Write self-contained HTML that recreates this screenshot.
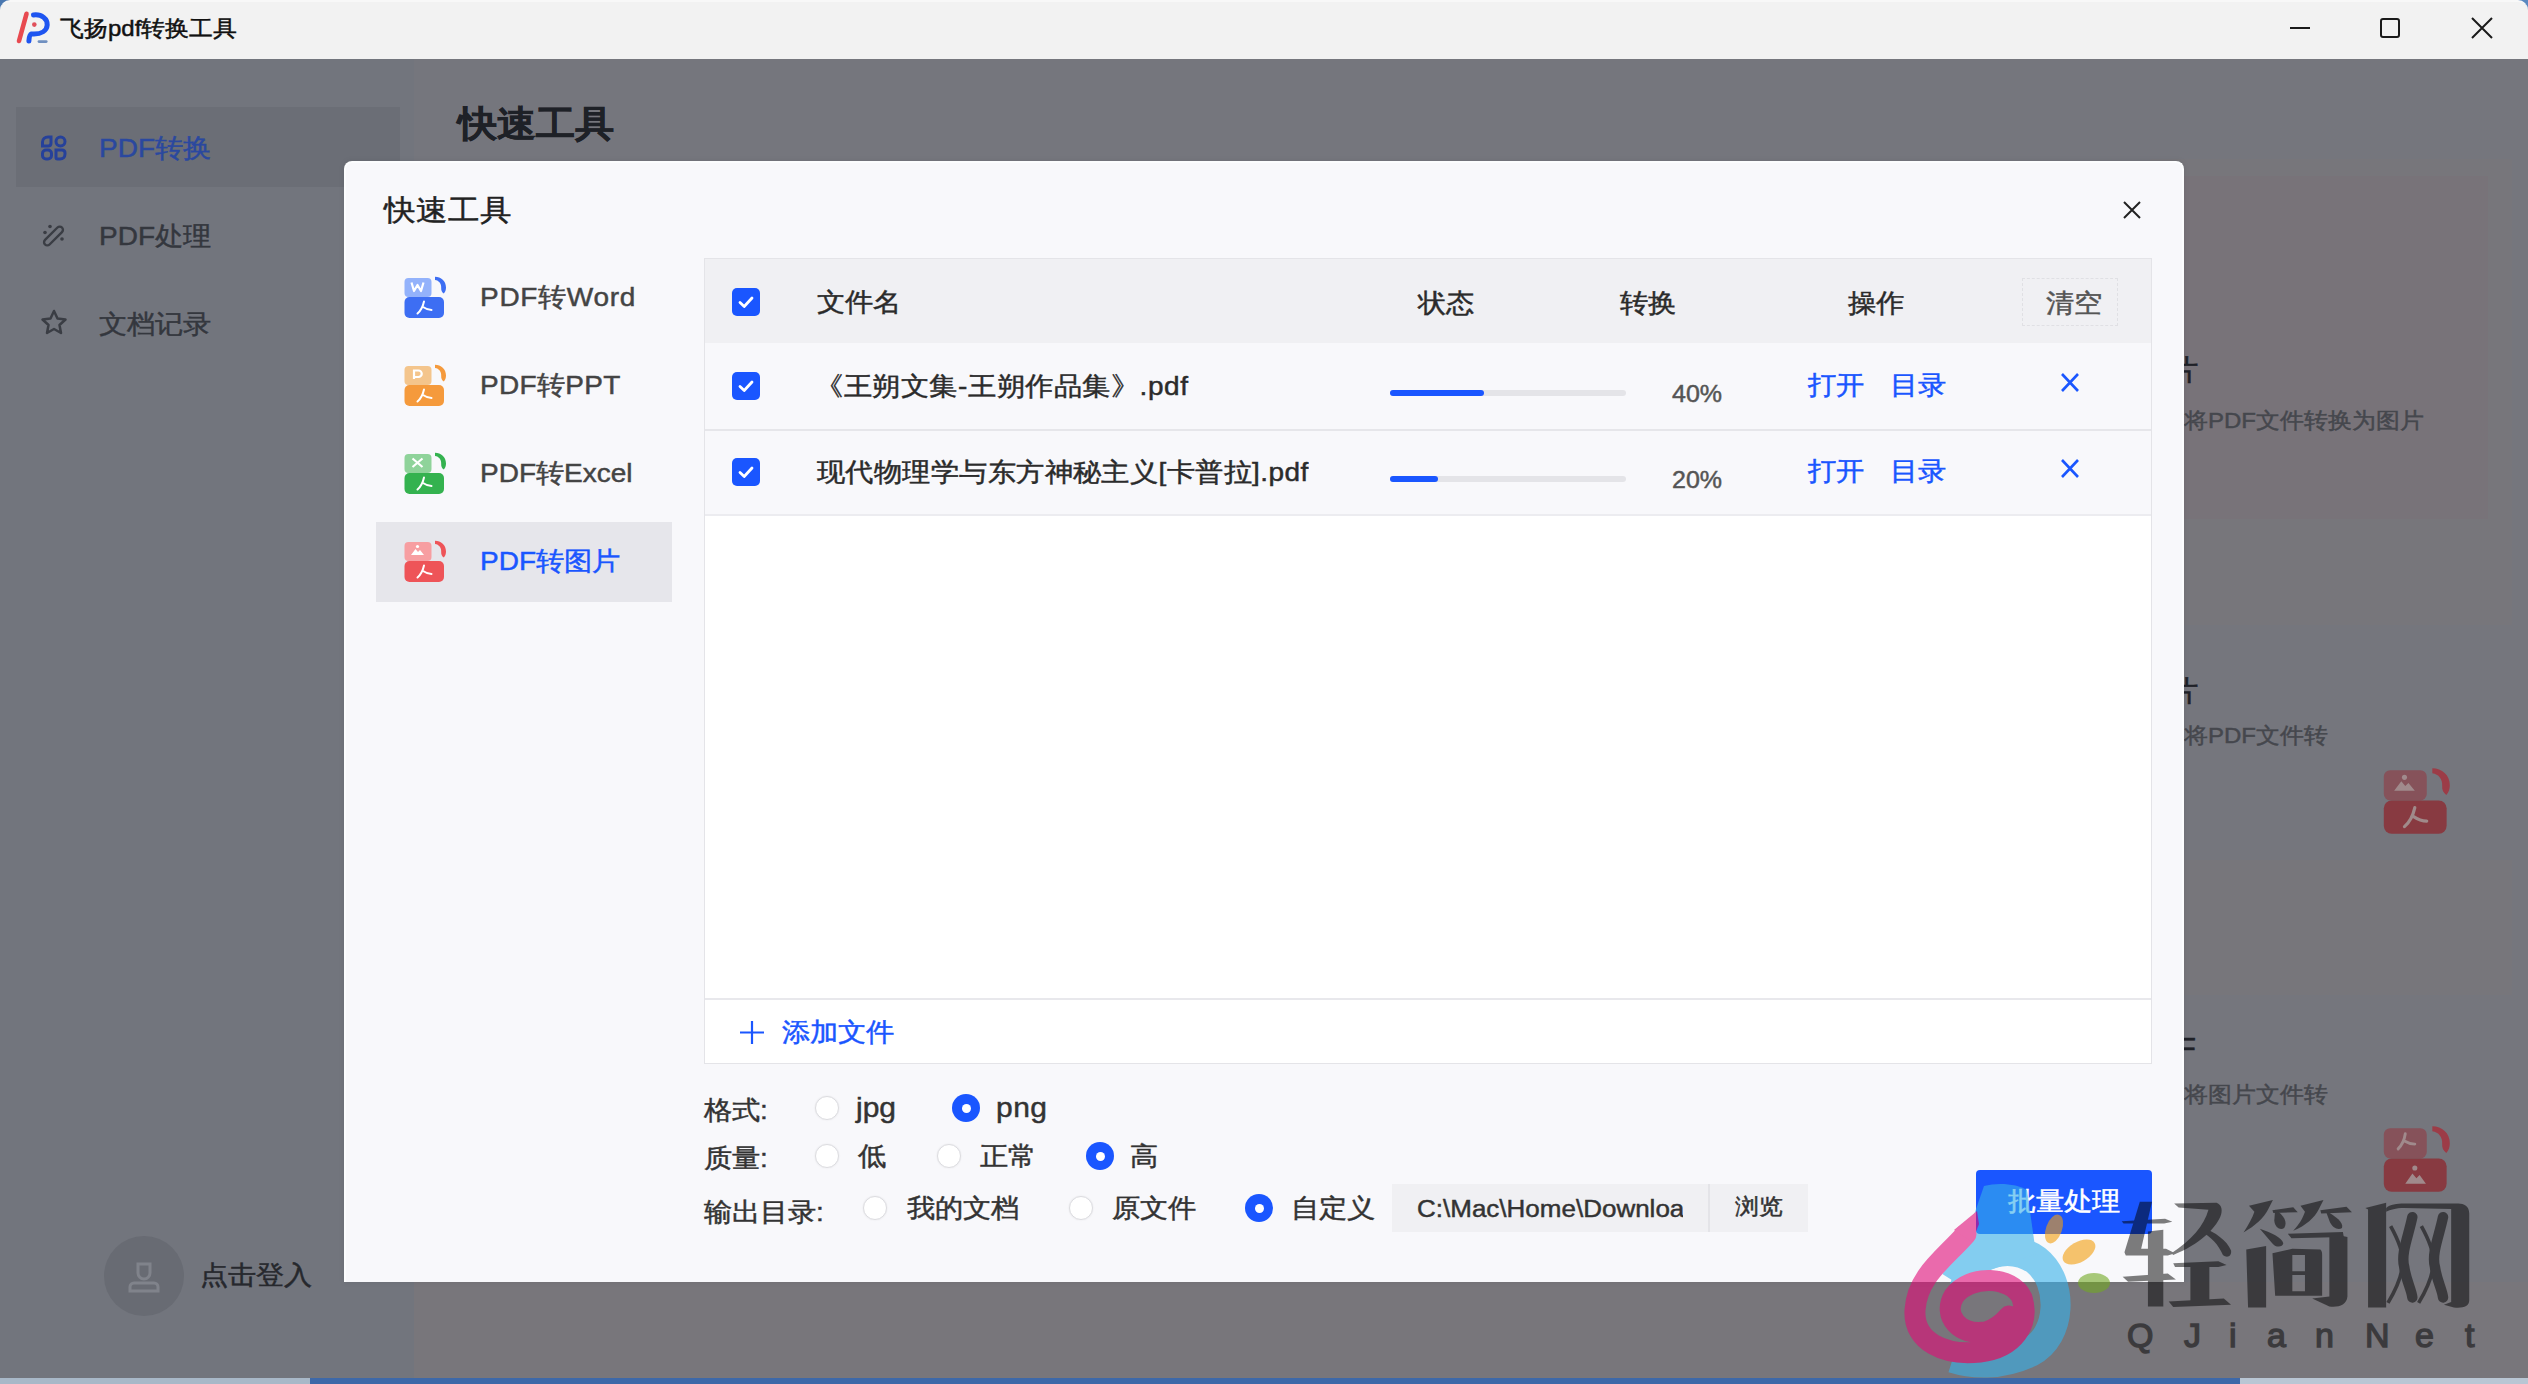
<!DOCTYPE html>
<html><head><meta charset="utf-8">
<style>
*{margin:0;padding:0;box-sizing:border-box}
html,body{width:2528px;height:1384px;overflow:hidden;background:#72757d;font-family:"Liberation Sans",sans-serif;color:#333}
.a{position:absolute;white-space:nowrap}
.t{line-height:1;-webkit-text-stroke:0.5px;transform:scaleY(0.92);transform-origin:50% 55%}
#titlebar{left:0;top:0;width:2528px;height:59px;background:#f2f2f2;border-radius:10px 10px 0 0;border-top:2px solid #f8f8f8}
#main{left:0;top:59px;width:2528px;height:1322px;background:#72757d}
#bottom{left:0;top:1376px;width:2528px;height:8px;background:#9fb3c8}
.nav{font-size:28px;color:#34373e}
#dlg{left:344px;top:161px;width:1840px;height:1121px;background:#f8f8fb;border:2px solid #fcfdfe;border-bottom:0;border-radius:8px 8px 0 0;box-shadow:0 0 6px rgba(0,0,0,0.08)}
.tb{font-size:28px;color:#2b2b2b}
.cb{width:28px;height:28px;border-radius:5px;background:#1a56ff}
.radio{width:24px;height:24px;border-radius:50%;background:#fff;border:1.5px solid #dcdce0;box-shadow:0 0 2px rgba(0,0,0,0.08)}
.rsel{width:28px;height:28px;border-radius:50%;background:#1a56ff}
.rsel:after{content:"";position:absolute;left:9.5px;top:9.5px;width:9px;height:9px;border-radius:50%;background:#fff}
.lbl{font-size:28px;color:#333}
.blue{color:#1a56ff !important}
</style></head><body>
<!-- title bar -->
<div class="a" style="left:0;top:0;width:14px;height:14px;background:#4a78b0"></div>
<div class="a" style="left:2514px;top:0;width:14px;height:14px;background:#5a88c0"></div>
<div id="titlebar" class="a"></div>
<div id="main" class="a"></div>
<div class="a" style="left:414px;top:59px;width:2114px;height:1322px;background:#75767d"></div>
<div class="a" style="left:414px;top:1282px;width:2114px;height:99px;background:#78767b"></div>
<div class="a" style="left:0;top:1378px;width:310px;height:6px;background:#a8b8c8"></div>
<div class="a" style="left:310px;top:1378px;width:1930px;height:6px;background:#3d68a8"></div>
<div class="a" style="left:2240px;top:1378px;width:288px;height:6px;background:#b9c6d4"></div>

<!-- logo -->
<svg class="a" style="left:0;top:0" width="60" height="59" viewBox="0 0 60 59">
  <path d="M26.5 13.8 L19 41" stroke="#e84a50" stroke-width="4.6" stroke-linecap="round"/>
  <path d="M33.5 15 C42 14 47.5 19 47.2 25 C46.8 31 41 34 34 34 L31.5 34 C29.8 34.5 29.2 36 28.9 41" fill="none" stroke="#1f55f0" stroke-width="5" stroke-linecap="round"/>
  <circle cx="34.3" cy="24.6" r="2.3" fill="#e0505a"/>
  <rect x="37.6" y="40.2" width="10" height="2.7" rx="1.3" fill="#7090c0"/>
</svg>
<div class="a t" style="left:60px;top:17px;font-size:24px;color:#111">飞扬pdf转换工具</div>

<!-- window controls -->
<div class="a" style="left:2290px;top:27px;width:20px;height:2px;background:#1a1a1a"></div>
<div class="a" style="left:2380px;top:18px;width:20px;height:20px;border:2px solid #1a1a1a;border-radius:3px"></div>
<svg class="a" style="left:2471px;top:17px" width="22" height="22" viewBox="0 0 22 22"><path d="M1 1L21 21M21 1L1 21" stroke="#1a1a1a" stroke-width="2"/></svg>


<!-- sidebar -->
<div class="a" style="left:16px;top:107px;width:384px;height:80px;background:#6b6e76"></div>
<svg class="a" style="left:40px;top:135px" width="28" height="26" viewBox="0 0 28 26">
  <g fill="none" stroke="#26419a" stroke-width="3">
   <path d="M2.5 11 V7 C2.5 4 5 2 8 2 H11 V8 C11 9.8 9.8 11 8 11 Z"/>
   <circle cx="20.5" cy="6.5" r="4.5"/>
   <rect x="2.5" y="15" width="9" height="9" rx="3.5"/>
   <path d="M16 15 H22 C24 15 25 16 25 18 V19 C25 22 23 24 20 24 H17.5 C16.6 24 16 23.4 16 22.5 Z"/>
  </g>
</svg>
<div class="a t nav" style="left:99px;top:135px;color:#2a489f">PDF转换</div>
<svg class="a" style="left:40px;top:222px" width="28" height="28" viewBox="0 0 28 28">
  <rect x="-12" y="-3.2" width="24" height="6.4" rx="3.2" transform="translate(13.5 14) rotate(-45)" fill="none" stroke="#3a3d44" stroke-width="2.4"/>
  <circle cx="10" cy="4.5" r="1.8" fill="#3a3d44"/>
  <circle cx="5" cy="10.5" r="1.8" fill="#3a3d44"/>
  <circle cx="22" cy="17" r="1.8" fill="#3a3d44"/>
</svg>
<div class="a t nav" style="left:99px;top:223px">PDF处理</div>
<svg class="a" style="left:39px;top:308px" width="30" height="30" viewBox="0 0 30 30">
  <path d="M15 3 L18.5 10.5 L26.5 11.5 L20.5 17 L22 25 L15 21 L8 25 L9.5 17 L3.5 11.5 L11.5 10.5 Z" fill="none" stroke="#3a3d44" stroke-width="2.5" stroke-linejoin="round"/>
</svg>
<div class="a t nav" style="left:99px;top:311px">文档记录</div>

<!-- avatar -->
<div class="a" style="left:104px;top:1236px;width:80px;height:80px;border-radius:50%;background:#686b73"></div>
<svg class="a" style="left:127px;top:1260px" width="34" height="34" viewBox="0 0 34 34">
  <g fill="none" stroke="#80838b" stroke-width="3">
   <path d="M11 4 H23 V13 A6 6 0 0 1 11 13 Z"/>
   <path d="M3 31 V27 A4 4 0 0 1 7 23 H27 A4 4 0 0 1 31 27 V31 Z"/>
  </g>
</svg>
<div class="a t nav" style="left:200px;top:1262px;color:#26282d">点击登入</div>

<!-- heading behind -->
<div class="a t" style="left:458px;top:104px;font-size:39px;font-weight:bold;color:#1e2127">快速工具</div>

<!-- right cards behind -->
<div class="a" style="left:2150px;top:159px;width:362px;height:466px;background:#77767b"></div>
<div class="a" style="left:2150px;top:176px;width:338px;height:343px;background:#787379"></div>
<div class="a" style="left:2150px;top:860px;width:362px;height:135px;background:#77767b"></div>
<div class="a t" style="right:329px;top:354px;font-size:32px;color:#1f2127">图片</div>
<div class="a t" style="left:2184px;top:409px;font-size:24px;color:#45474d">将PDF文件转换为图片</div>
<div class="a t" style="right:329px;top:675px;font-size:32px;color:#1f2127">图片</div>
<div class="a t" style="left:2184px;top:724px;font-size:24px;color:#45474d">将PDF文件转</div>
<div class="a t" style="right:332px;top:1032px;font-size:32px;color:#1f2127">PDF</div>
<div class="a t" style="left:2184px;top:1083px;font-size:24px;color:#45474d">将图片文件转</div>
<svg class="a" style="left:2383px;top:767px" width="70" height="70" viewBox="0 0 44 44">
 <rect x="0.5" y="2" width="27" height="19" rx="4" fill="#86525a"/>
 <path d="M7 15 L11.5 9 L14 12 L16 10 L20 15 Z" fill="#a08a8c"/><circle cx="13.5" cy="6.5" r="1.6" fill="#a08a8c"/>
 <path d="M31 0.8 C37 0.8 42 5 42 11.5 C42 14 41.2 16 39.8 17.6 C37.8 16.2 37 14.2 37.2 12 C37.5 7.8 35 4.5 31 4 Z" fill="#9c3c47"/>
 <rect x="0.5" y="21" width="39.5" height="21" rx="5" fill="#883a41"/>
 <path d="M20 25.5 C19 30 17.5 34 13.5 37.5 M19 31 C22 33 25 34 27.5 34" fill="none" stroke="#a08a8a" stroke-width="2" stroke-linecap="round"/>
</svg>
<svg class="a" style="left:2383px;top:1125px" width="70" height="70" viewBox="0 0 44 44">
 <rect x="0.5" y="2" width="27" height="19" rx="4" fill="#86525a"/>
 <path d="M14 5.5 C13.5 9 12.5 12 9.5 15 M13.5 10 C16 11.5 18 12 20 12" fill="none" stroke="#a08a8c" stroke-width="1.8" stroke-linecap="round"/>
 <path d="M31 0.8 C37 0.8 42 5 42 11.5 C42 14 41.2 16 39.8 17.6 C37.8 16.2 37 14.2 37.2 12 C37.5 7.8 35 4.5 31 4 Z" fill="#9c3c47"/>
 <rect x="0.5" y="21" width="39.5" height="21" rx="5" fill="#883a41"/>
 <path d="M14 37 L18.5 30.5 L21 33.5 L23 31.5 L27 37 Z" fill="#a08a8c"/><circle cx="20" cy="27" r="1.6" fill="#a08a8c"/>
</svg>
<!-- dialog -->
<div id="dlg" class="a"></div>
<div class="a t" style="left:384px;top:194px;font-size:32px;color:#222">快速工具</div>
<svg class="a" style="left:2123px;top:201px" width="18" height="18" viewBox="0 0 18 18"><path d="M1 1L17 17M17 1L1 17" stroke="#222" stroke-width="2"/></svg>

<!-- left menu -->
<div class="a" style="left:376px;top:522px;width:296px;height:80px;background:#e6e6eb"></div>
<div class="a t lbl" style="left:480px;top:284px;color:#444;letter-spacing:0.7px">PDF转Word</div>
<div class="a t lbl" style="left:480px;top:372px;color:#444;letter-spacing:0.3px">PDF转PPT</div>
<div class="a t lbl" style="left:480px;top:460px;color:#444">PDF转Excel</div>
<div class="a t lbl blue" style="left:480px;top:548px">PDF转图片</div>

<svg class="a" style="left:404px;top:276px" width="44" height="44" viewBox="0 0 44 44">
 <rect x="0.5" y="2" width="27" height="19" rx="4" fill="#93b2fb"/>
 <path d="M7.5 6.5 L10 15 L13.5 9 L17 15 L19.5 6.5" fill="none" stroke="#fff" stroke-width="2.2" stroke-linejoin="round"/>
 <path d="M31 0.8 C37 0.8 42 5 42 11.5 C42 14 41.2 16 39.8 17.6 C37.8 16.2 37 14.2 37.2 12 C37.5 7.8 35 4.5 31 4 Z" fill="#3d6ef3"/>
 <rect x="0.5" y="21" width="39.5" height="21" rx="5" fill="#3d6ef3"/>
 <path d="M20 25.5 C19 30 17.5 34 13.5 37.5 M19 31 C22 33 25 34 27.5 34" fill="none" stroke="#fff" stroke-width="2" stroke-linecap="round"/>
</svg><svg class="a" style="left:404px;top:364px" width="44" height="44" viewBox="0 0 44 44">
 <rect x="0.5" y="2" width="27" height="19" rx="4" fill="#f4c58c"/>
 <path d="M10 15 V6.5 H14.5 A3.2 3.2 0 0 1 14.5 13 H10" fill="none" stroke="#fff" stroke-width="2.2"/>
 <path d="M31 0.8 C37 0.8 42 5 42 11.5 C42 14 41.2 16 39.8 17.6 C37.8 16.2 37 14.2 37.2 12 C37.5 7.8 35 4.5 31 4 Z" fill="#f59a3c"/>
 <rect x="0.5" y="21" width="39.5" height="21" rx="5" fill="#f59a3c"/>
 <path d="M20 25.5 C19 30 17.5 34 13.5 37.5 M19 31 C22 33 25 34 27.5 34" fill="none" stroke="#fff" stroke-width="2" stroke-linecap="round"/>
</svg><svg class="a" style="left:404px;top:452px" width="44" height="44" viewBox="0 0 44 44">
 <rect x="0.5" y="2" width="27" height="19" rx="4" fill="#8fd39a"/>
 <path d="M8.5 6.5 L18.5 15 M18.5 6.5 L8.5 15" fill="none" stroke="#fff" stroke-width="2.2"/>
 <path d="M31 0.8 C37 0.8 42 5 42 11.5 C42 14 41.2 16 39.8 17.6 C37.8 16.2 37 14.2 37.2 12 C37.5 7.8 35 4.5 31 4 Z" fill="#34b24f"/>
 <rect x="0.5" y="21" width="39.5" height="21" rx="5" fill="#34b24f"/>
 <path d="M20 25.5 C19 30 17.5 34 13.5 37.5 M19 31 C22 33 25 34 27.5 34" fill="none" stroke="#fff" stroke-width="2" stroke-linecap="round"/>
</svg><svg class="a" style="left:404px;top:540px" width="44" height="44" viewBox="0 0 44 44">
 <rect x="0.5" y="2" width="27" height="19" rx="4" fill="#f79ea1"/>
 <path d="M7 15 L11.5 9 L14 12 L16 10 L20 15 Z" fill="#fff"/><circle cx="13.5" cy="6.5" r="1.6" fill="#fff"/>
 <path d="M31 0.8 C37 0.8 42 5 42 11.5 C42 14 41.2 16 39.8 17.6 C37.8 16.2 37 14.2 37.2 12 C37.5 7.8 35 4.5 31 4 Z" fill="#ee5458"/>
 <rect x="0.5" y="21" width="39.5" height="21" rx="5" fill="#ee5458"/>
 <path d="M20 25.5 C19 30 17.5 34 13.5 37.5 M19 31 C22 33 25 34 27.5 34" fill="none" stroke="#fff" stroke-width="2" stroke-linecap="round"/>
</svg>
<!-- table -->
<div class="a" style="left:704px;top:258px;width:1448px;height:806px;background:#fff;border:1px solid #e4e4e8"></div>
<div class="a" style="left:705px;top:259px;width:1446px;height:84px;background:#f0f0f3"></div>
<div class="a" style="left:705px;top:343px;width:1446px;height:86px;background:#f8f8fb"></div>
<div class="a" style="left:705px;top:429px;width:1446px;height:2px;background:#e6e6ea"></div>
<div class="a" style="left:705px;top:431px;width:1446px;height:83px;background:#f8f8fb"></div>
<div class="a" style="left:705px;top:514px;width:1446px;height:2px;background:#ececf0"></div>
<div class="a" style="left:705px;top:998px;width:1446px;height:2px;background:#e8e8ec"></div>

<div class="a cb" style="left:732px;top:288px"><svg width="28" height="28" viewBox="0 0 28 28" style="position:absolute;left:0;top:0"><path d="M8 14.5 L12.2 18.5 L20 10" fill="none" stroke="#fff" stroke-width="2.8" stroke-linecap="round" stroke-linejoin="round"/></svg></div>
<div class="a cb" style="left:732px;top:372px"><svg width="28" height="28" viewBox="0 0 28 28" style="position:absolute;left:0;top:0"><path d="M8 14.5 L12.2 18.5 L20 10" fill="none" stroke="#fff" stroke-width="2.8" stroke-linecap="round" stroke-linejoin="round"/></svg></div>
<div class="a cb" style="left:732px;top:458px"><svg width="28" height="28" viewBox="0 0 28 28" style="position:absolute;left:0;top:0"><path d="M8 14.5 L12.2 18.5 L20 10" fill="none" stroke="#fff" stroke-width="2.8" stroke-linecap="round" stroke-linejoin="round"/></svg></div>

<div class="a t tb" style="left:817px;top:289px">文件名</div>
<div class="a t tb" style="left:1418px;top:290px">状态</div>
<div class="a t tb" style="left:1620px;top:290px">转换</div>
<div class="a t tb" style="left:1848px;top:290px">操作</div>
<div class="a" style="left:2022px;top:278px;width:96px;height:48px;border:1px dashed #e0e0e4"></div>
<div class="a t tb" style="left:2046px;top:290px;color:#555">清空</div>

<div class="a t tb" style="left:815px;top:373px;letter-spacing:0.6px">《王朔文集-王朔作品集》.pdf</div>
<div class="a t tb" style="left:817px;top:459px;letter-spacing:0.45px">现代物理学与东方神秘主义[卡普拉].pdf</div>

<div class="a" style="left:1390px;top:390px;width:236px;height:6px;border-radius:3px;background:#e4e4e8"></div>
<div class="a" style="left:1390px;top:390px;width:94px;height:6px;border-radius:3px;background:#1a56ff"></div>
<div class="a" style="left:1390px;top:476px;width:236px;height:6px;border-radius:3px;background:#e4e4e8"></div>
<div class="a" style="left:1390px;top:476px;width:48px;height:6px;border-radius:3px;background:#1a56ff"></div>
<div class="a t" style="left:1672px;top:382px;font-size:25px;color:#555">40%</div>
<div class="a t" style="left:1672px;top:468px;font-size:25px;color:#555">20%</div>

<div class="a t lbl blue" style="left:1808px;top:372px">打开</div>
<div class="a t lbl blue" style="left:1890px;top:372px">目录</div>
<div class="a t lbl blue" style="left:1808px;top:458px">打开</div>
<div class="a t lbl blue" style="left:1890px;top:458px">目录</div>
<svg class="a" style="left:2060px;top:373px" width="20" height="19" viewBox="0 0 20 19"><path d="M2 1L18 18M18 1L2 18" stroke="#1a56ff" stroke-width="2.6"/></svg>
<svg class="a" style="left:2060px;top:459px" width="20" height="19" viewBox="0 0 20 19"><path d="M2 1L18 18M18 1L2 18" stroke="#1a56ff" stroke-width="2.6"/></svg>

<svg class="a" style="left:740px;top:1021px" width="24" height="23" viewBox="0 0 24 23"><path d="M12 0V23M0 11.5H24" stroke="#1a56ff" stroke-width="2.2"/></svg>
<div class="a t lbl blue" style="left:782px;top:1019px">添加文件</div>

<!-- options -->
<div class="a t lbl" style="left:704px;top:1097px">格式:</div>
<div class="a radio" style="left:815px;top:1096px"></div>
<div class="a t lbl" style="left:856px;top:1093px;font-size:30px">jpg</div>
<div class="a rsel" style="left:952px;top:1094px"></div>
<div class="a t lbl" style="left:996px;top:1093px;font-size:30px;letter-spacing:0.5px">png</div>

<div class="a t lbl" style="left:704px;top:1145px">质量:</div>
<div class="a radio" style="left:815px;top:1144px"></div>
<div class="a t lbl" style="left:858px;top:1143px">低</div>
<div class="a radio" style="left:937px;top:1144px"></div>
<div class="a t lbl" style="left:980px;top:1143px">正常</div>
<div class="a rsel" style="left:1086px;top:1142px"></div>
<div class="a t lbl" style="left:1130px;top:1143px">高</div>

<div class="a t lbl" style="left:704px;top:1199px">输出目录:</div>
<div class="a radio" style="left:863px;top:1196px"></div>
<div class="a t lbl" style="left:907px;top:1195px">我的文档</div>
<div class="a radio" style="left:1069px;top:1196px"></div>
<div class="a t lbl" style="left:1112px;top:1195px">原文件</div>
<div class="a rsel" style="left:1245px;top:1194px"></div>
<div class="a t lbl" style="left:1291px;top:1195px">自定义</div>
<div class="a" style="left:1392px;top:1184px;width:416px;height:48px;background:#f0f0f3"></div>
<div class="a" style="left:1708px;top:1184px;width:2px;height:48px;background:#e4e4e8"></div>
<div class="a" style="left:1417px;top:1196px;width:266px;height:30px;overflow:hidden"><div class="t" style="font-size:26px;color:#333;white-space:nowrap">C:\Mac\Home\Downloads</div></div>
<div class="a t" style="left:1735px;top:1195px;font-size:24px;color:#333">浏览</div>

<div class="a" style="left:1976px;top:1170px;width:176px;height:64px;background:#1a56ff;border-radius:4px"></div>
<div class="a t" style="left:2008px;top:1188px;font-size:28px;color:#fff">批量处理</div>


<!-- watermark -->
<svg class="a" style="left:0;top:0" width="2528" height="1384" viewBox="0 0 2528 1384">
  <g opacity="0.6">
   <path d="M1955 1282 C1974 1252, 2010 1242, 2036 1260 C2064 1282, 2062 1336, 2030 1352 C2000 1366, 1972 1364, 1953 1358" fill="none" stroke="rgb(55,177,234)" stroke-width="30" stroke-linecap="butt"/>
   <path d="M1950 1284 L1984 1186 C1998 1182, 2018 1184, 2027 1190 L2036 1254 Z" fill="rgb(55,177,234)"/>
   <path d="M1966 1234 C1945 1258, 1917 1276, 1915 1310 C1913 1342, 1945 1356, 1980 1352 C2014 1348, 2030 1324, 2022 1298 C2012 1276, 1970 1274, 1954 1296 C1942 1316, 1960 1336, 1986 1332 C1996 1329, 2003 1323, 2009 1316" fill="none" stroke="rgb(225,12,120)" stroke-width="21" stroke-linecap="round"/>
   <path d="M1977 1211 L1979 1224 L1972 1242 L1954 1230 Z" fill="rgb(225,12,120)"/>
   <ellipse cx="2054" cy="1229" rx="8" ry="15" transform="rotate(20 2054 1229)" fill="rgb(244,159,14)"/>
   <ellipse cx="2079" cy="1252" rx="18" ry="10" transform="rotate(-30 2079 1252)" fill="rgb(244,159,14)"/>
   <ellipse cx="2094" cy="1283" rx="16" ry="10" fill="rgb(115,169,35)"/>
  </g>
</svg>
<svg class="a" style="left:0;top:0" width="2528" height="1384" viewBox="0 0 2528 1384">
 <g opacity="0.5" fill="#000">
  <g transform="translate(2110 1190) scale(0.09033)">
   <path d="M330 130 L465 130 L345 650 L620 650 L720 700 L640 725 L175 725 L160 690 Z"/>
   <path d="M130 345 L610 318 L690 352 L600 372 L150 372 Z"/>
   <path d="M420 460 L590 440 L590 1290 L420 1290 Z"/>
   <path d="M140 960 L640 925 L730 990 L200 1015 Z"/>
   <path d="M710 150 L1180 140 C1240 160 1250 230 1220 300 C1160 430 1000 600 700 720 L680 700 C900 560 1040 400 1090 220 L760 195 Z"/>
   <path d="M1040 420 C1150 460 1300 560 1340 670 C1350 730 1300 760 1250 720 C1200 600 1120 520 1000 450 Z"/>
   <path d="M700 810 L1200 790 L1290 830 L1200 852 L720 852 Z"/>
   <path d="M890 835 L1100 835 L1100 1240 L890 1240 Z"/>
   <path d="M650 1235 L1260 1200 L1340 1270 L700 1295 Z"/>
  </g>
  <g transform="translate(2230 1190) scale(0.09033)">
   <path d="M210 175 L475 110 L420 220 C380 300 280 400 150 470 C210 380 250 300 270 240 Z"/>
   <path d="M500 220 C600 280 640 360 600 420 C560 450 500 420 490 340 Z"/>
   <path d="M470 225 L700 190 L750 245 L480 255 Z"/>
   <path d="M780 175 L1035 110 L980 220 C940 300 840 400 700 450 C770 380 810 300 830 240 Z"/>
   <path d="M1060 230 C1170 290 1260 360 1240 420 C1200 450 1130 420 1100 340 Z"/>
   <path d="M1000 225 L1290 185 L1350 245 L1010 260 Z"/>
   <path d="M330 430 C450 470 580 530 590 590 C580 640 500 640 460 580 Z"/>
   <path d="M180 660 L400 620 L400 1300 L200 1300 Z"/>
   <path d="M640 485 L1250 465 L1260 520 L680 535 Z"/>
   <path d="M1100 480 L1300 520 L1300 1180 C1290 1280 1200 1300 1100 1290 L910 1200 L1100 1180 Z"/>
   <path fill-rule="evenodd" d="M470 700 L690 650 L1000 660 C1020 680 1020 700 1020 720 L1020 1170 L500 1170 Z M690 720 L830 720 L830 900 L690 900 Z M690 940 L830 940 L830 1120 L690 1120 Z"/>
  </g>
  <g transform="translate(2350 1190) scale(0.09033)">
   <path d="M170 200 L400 140 L400 1300 L200 1300 L200 215 Z"/>
   <path d="M400 200 C440 160 520 150 600 150 L1200 150 C1260 150 1320 180 1320 260 L1320 1220 C1320 1290 1250 1310 1150 1300 L1040 1270 L1120 1240 L1120 210 L600 200 C500 200 450 220 400 240 Z"/>
   <path d="M690 300 C650 500 560 700 600 850 C620 1000 680 1100 690 1190" fill="none" stroke="#000" stroke-width="115" stroke-linecap="round"/>
   <path d="M450 400 C560 600 600 750 580 850 C560 1000 480 1150 420 1250" fill="none" stroke="#000" stroke-width="40"/>
   <path d="M1030 300 C990 500 900 700 940 850 C960 1000 1020 1100 1030 1190" fill="none" stroke="#000" stroke-width="115" stroke-linecap="round"/>
   <path d="M790 400 C900 600 940 750 920 850 C900 1000 820 1150 760 1250" fill="none" stroke="#000" stroke-width="40"/>
  </g>
 </g>
</svg>
<div class="a" style="line-height:1;left:2127px;top:1318px;font-size:34px;color:#000;opacity:0.5;-webkit-text-stroke:1.4px #000">
<span class="a" style="left:0px">Q</span><span class="a" style="left:57px">J</span><span class="a" style="left:102px">i</span><span class="a" style="left:140px">a</span><span class="a" style="left:188px">n</span><span class="a" style="left:238px">N</span><span class="a" style="left:288px">e</span><span class="a" style="left:338px">t</span>
</div>

</body></html>
